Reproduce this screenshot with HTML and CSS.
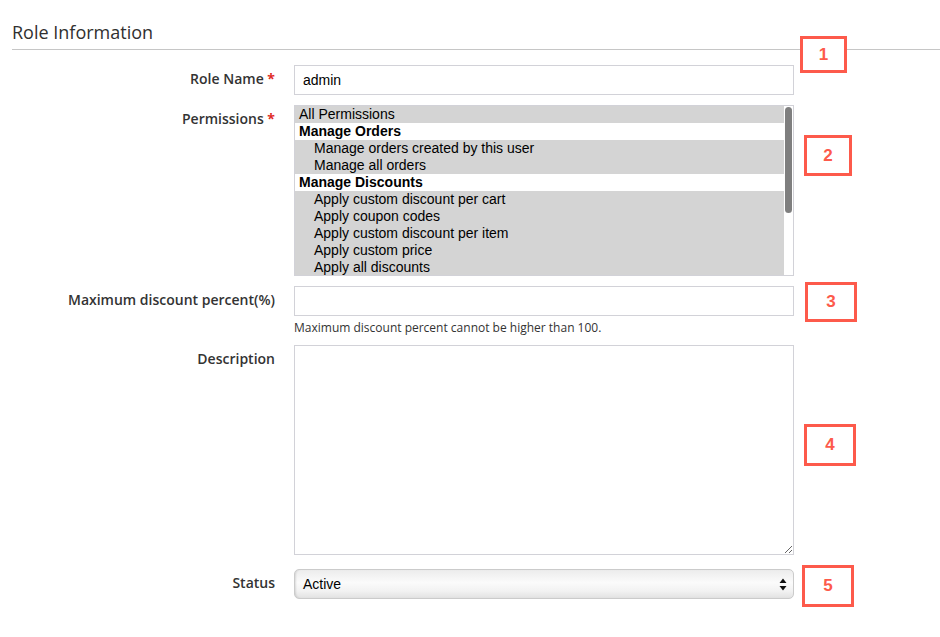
FILE: index.html
```html
<!DOCTYPE html>
<html>
<head>
<meta charset="utf-8">
<link rel="stylesheet" href="styles.css">
</head>
<body>
<div class="page">
  <h2 class="section-title">Role Information</h2>
  <div class="form">
    <div class="row row-name">
      <label class="label">Role Name <span class="req">*</span></label>
      <div class="field"><input class="input" type="text" value="admin"></div>
    </div>
    <div class="row row-perm">
      <label class="label">Permissions <span class="req">*</span></label>
      <div class="field">
        <div class="listbox">
          <div class="opt sel">All Permissions</div>
          <div class="grp">Manage Orders</div>
          <div class="opt sel sub">Manage orders created by this user</div>
          <div class="opt sel sub">Manage all orders</div>
          <div class="grp">Manage Discounts</div>
          <div class="opt sel sub">Apply custom discount per cart</div>
          <div class="opt sel sub">Apply coupon codes</div>
          <div class="opt sel sub">Apply custom discount per item</div>
          <div class="opt sel sub">Apply custom price</div>
          <div class="opt sel sub">Apply all discounts</div>
          <div class="thumb"></div>
        </div>
      </div>
    </div>
    <div class="row row-max">
      <label class="label">Maximum discount percent(%)</label>
      <div class="field">
        <input class="input" type="text">
        <div class="note">Maximum discount percent cannot be higher than 100.</div>
      </div>
    </div>
    <div class="row row-desc">
      <label class="label">Description</label>
      <div class="field"><textarea class="textarea"></textarea></div>
    </div>
    <div class="row row-status">
      <label class="label">Status</label>
      <div class="field">
        <div class="select">
          <span class="select-value">Active</span>
          <svg class="select-arrow" width="8" height="13" viewBox="0 0 8 13"><path d="M4 0.5 L7.5 5 L0.5 5 Z M4 12.5 L7.5 8 L0.5 8 Z" fill="#111"/></svg>
        </div>
      </div>
    </div>
  </div>
  <div class="badge b1">1</div>
  <div class="badge b2">2</div>
  <div class="badge b3">3</div>
  <div class="badge b4">4</div>
  <div class="badge b5">5</div>
</div>
</body>
</html>
```
FILE: styles.css
```css
html, body {
  margin: 0;
  padding: 0;
  background: #fff;
}
body {
  font-family: "Open Sans", "Liberation Sans", sans-serif;
  color: #333;
}
.page {
  position: relative;
  width: 940px;
  height: 637px;
  overflow: hidden;
}
.section-title {
  margin: 0 0 0 12px;
  padding: 20px 0 5px 0;
  font-size: 18px;
  line-height: 24px;
  font-weight: 400;
  color: #303030;
  border-bottom: 1px solid #c6c6c6;
}
.form {
  padding: 15px 0 0 12px;
}
.row {
  display: grid;
  grid-template-columns: 263px 500px;
  column-gap: 19px;
  align-items: start;
}
.row-name, .row-perm { margin-bottom: 10px; }
.row-max { margin-bottom: 9px; }
.row-desc { margin-bottom: 14px; }
.label {
  text-align: right;
  font-size: 14px;
  font-weight: 600;
  line-height: 20px;
  padding-top: 4px;
  color: #333;
}
.req {
  color: #e02b27;
  font-weight: 700;
}
.field {
  display: flex;
  flex-direction: column;
}
.input {
  box-sizing: border-box;
  width: 500px;
  height: 30px;
  margin: 0;
  border: 1px solid #d2d2d8;
  padding: 0 8px;
  font-family: "Liberation Sans", Arial, sans-serif;
  font-size: 14px;
  color: #000;
  outline: none;
}
.listbox {
  position: relative;
  box-sizing: border-box;
  width: 500px;
  height: 171px;
  border: 1px solid #d2d2d8;
  padding: 0 9px 0 0;
  overflow: hidden;
  font-family: "Liberation Sans", Arial, sans-serif;
  font-size: 14px;
  color: #000;
}
.opt, .grp {
  height: 17px;
  line-height: 17px;
  padding-left: 4px;
  white-space: nowrap;
}
.opt.sel { background: #d4d4d4; }
.opt.sub { padding-left: 19px; }
.grp { font-weight: 700; background: #fff; }
.thumb {
  position: absolute;
  top: 1px;
  right: 1px;
  width: 7px;
  height: 106px;
  border-radius: 4px;
  background: #7f7f7f;
}
.note {
  margin-top: 4px;
  font-size: 12px;
  line-height: 16px;
  color: #333;
}
.textarea {
  box-sizing: border-box;
  width: 500px;
  height: 210px;
  margin: 0;
  border: 1px solid #d2d2d8;
  resize: vertical;
  outline: none;
  display: block;
}
.select {
  box-sizing: border-box;
  width: 500px;
  height: 30px;
  border: 1px solid #cbcbcb;
  border-radius: 5px;
  background: linear-gradient(#ececec, #fbfbfb 45%, #f2f2f2 75%, #e2e2e2);
  box-shadow: inset 2px 0 2px -1px rgba(0,0,0,0.12);
  display: flex;
  align-items: center;
  justify-content: space-between;
  padding: 0 6px 0 8px;
  font-family: "Liberation Sans", Arial, sans-serif;
  font-size: 14px;
  color: #000;
}
.select-arrow { display: block; }
.badge {
  position: absolute;
  box-sizing: border-box;
  border: 3px solid #fd5a4b;
  color: #fd5a4b;
  font-family: "Liberation Sans", Arial, sans-serif;
  font-weight: 700;
  font-size: 17px;
  display: flex;
  align-items: center;
  justify-content: center;
  background: #fff;
}
.b1 { left: 800px; top: 36px; width: 47px; height: 37px; }
.b2 { left: 804px; top: 135px; width: 48px; height: 41px; }
.b3 { left: 805px; top: 282px; width: 52px; height: 40px; }
.b4 { left: 804px; top: 424px; width: 52px; height: 42px; }
.b5 { left: 802px; top: 565px; width: 52px; height: 42px; }
```
